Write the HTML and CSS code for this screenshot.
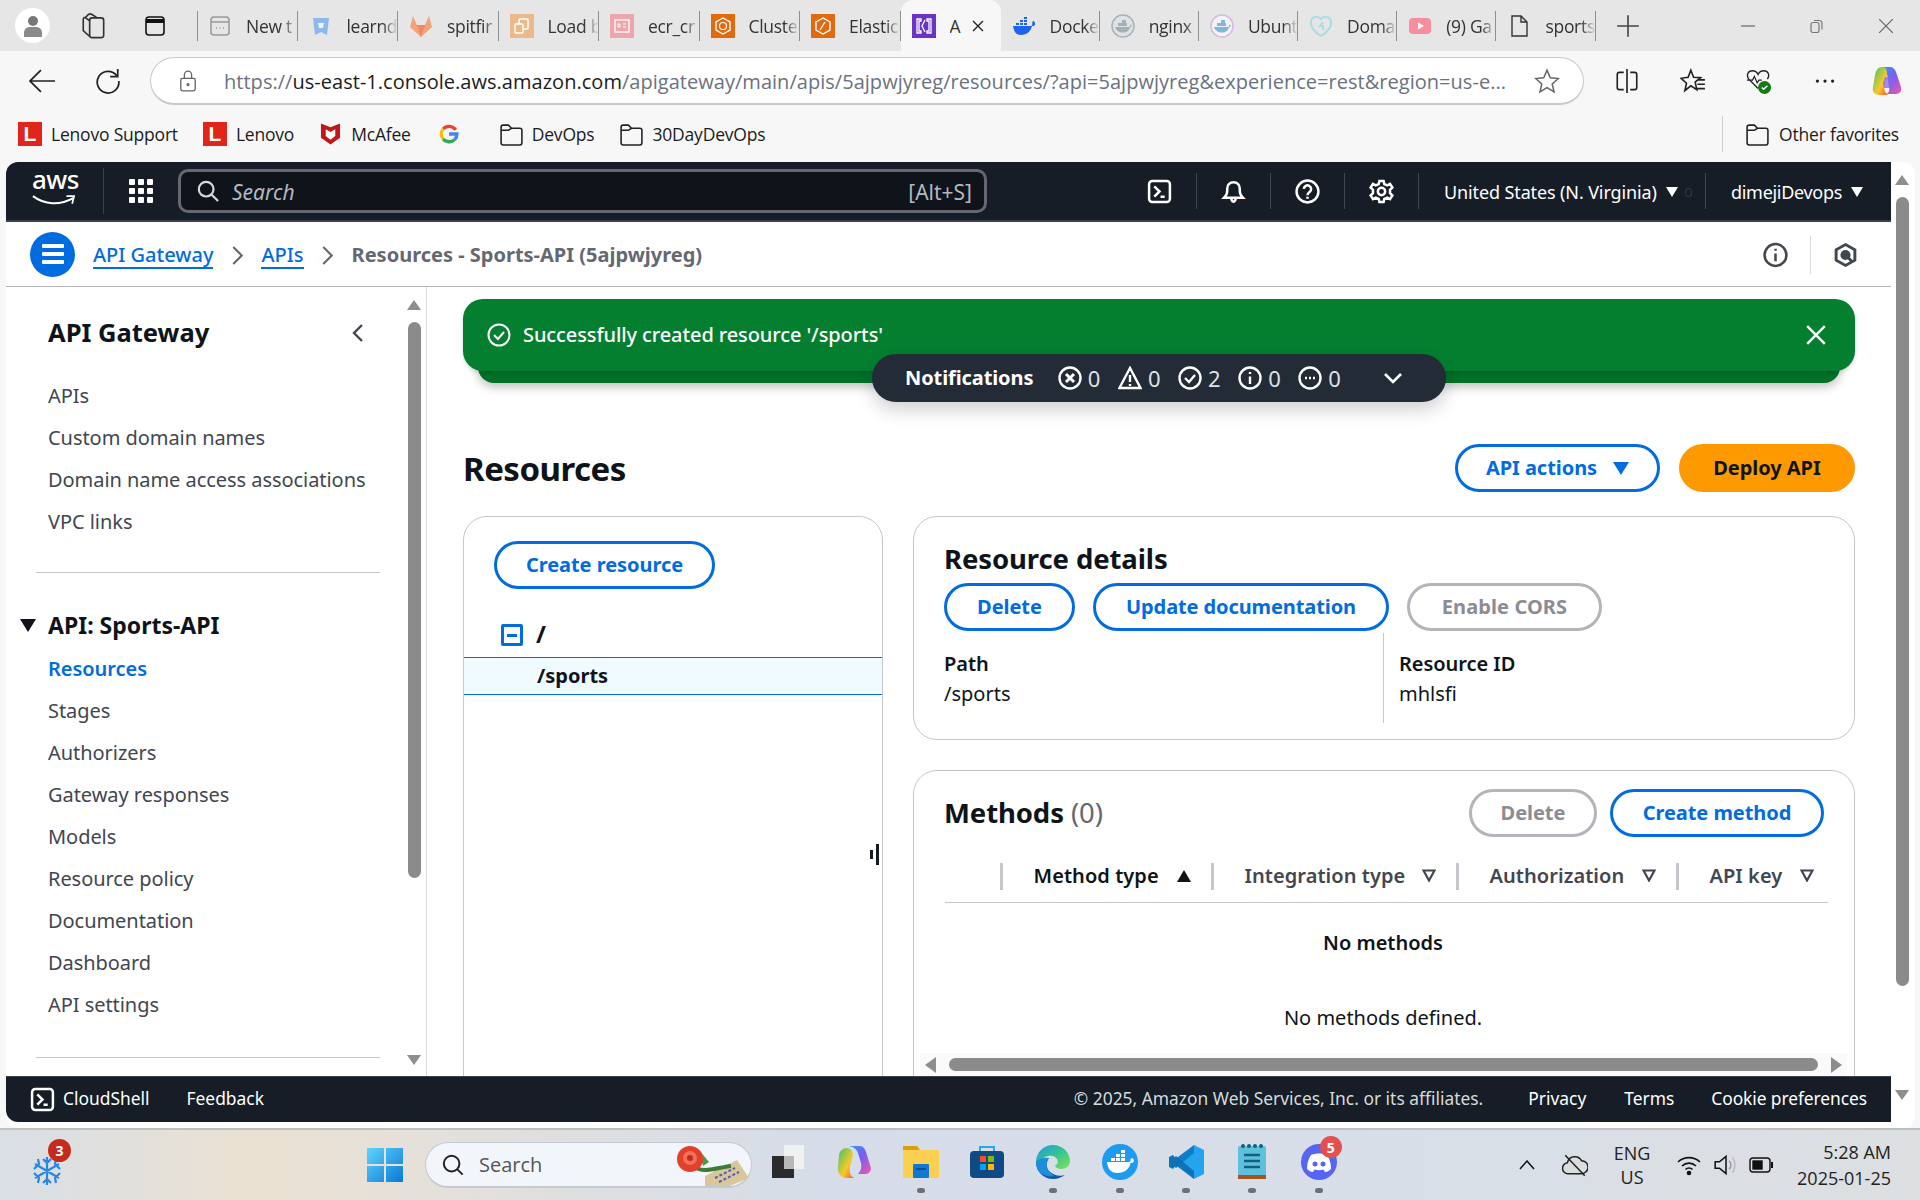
FILE: index.html
```html
<!DOCTYPE html>
<html lang="en">
<head>
<meta charset="utf-8">
<title>API Gateway - Resources</title>
<link rel="stylesheet" href="styles.css">
</head>
<body>
<div class="tabstrip">
  <div class="profile"><svg viewBox="0 0 24 24" width="24" height="24"><circle cx="12" cy="7" r="5" fill="#777"/><path d="M3 23v-4c0-4 3-6 6-6h6c3 0 6 2 6 6v4z" fill="#8a8a8a"/></svg></div>
  <svg class="chrome-ic ws" viewBox="0 0 24 24" fill="none" stroke="#333" stroke-width="1.400"><rect x="10" y="5" width="12" height="17" rx="2"/><path d="M10 7.500 6.500 5C5.500 4.400 4.500 5 4.500 6.200V16l5.500 5"/><path d="M6 5l3-3c1-.6 2-.4 3 .2l4.500 2.800"/></svg>
  <svg class="chrome-ic vt" viewBox="0 0 24 24" fill="none" stroke="#111" stroke-width="1.600"><rect x="3" y="3" width="18" height="18" rx="3"/><path d="M3 7h18" stroke-width="4"/></svg>
  <div class="tabs">
    <div class="tab tab-first"><svg class="tab-ic" viewBox="0 0 24 24" fill="none" stroke="#999" stroke-width="1.500"><rect x="3" y="3" width="18" height="18" rx="3"/><path d="M3 8h18M8 14h1M11.500 14h1M15 14h1"/></svg><span class="tab-label">New t</span></div>
    <div class="tab"><svg class="tab-ic" viewBox="0 0 24 24"><path d="M4 4h16l-2 17-6-3-6 3z" fill="#8db8ee"/><path d="M9 9h6l-1 5h-4z" fill="#eef4fc"/></svg><span class="tab-label">learnd</span></div>
    <div class="tab"><svg class="tab-ic" viewBox="0 0 24 24"><path d="M12 23 1 13 4 2l4 9h8l4-9 3 11z" fill="#f3a27b"/><path d="M12 23 8 11h8z" fill="#ee8a63"/></svg><span class="tab-label">spitfir</span></div>
    <div class="tab"><svg class="tab-ic" viewBox="0 0 24 24"><rect width="24" height="24" fill="#ecb98a"/><rect x="9" y="5" width="9" height="10" rx="1" fill="none" stroke="#fff" stroke-width="1.500"/><rect x="5" y="10" width="8" height="9" rx="1" fill="#ecb98a" stroke="#fff" stroke-width="1.500"/></svg><span class="tab-label">Load b</span></div>
    <div class="tab"><svg class="tab-ic" viewBox="0 0 24 24"><rect width="24" height="24" fill="#eda6ab"/><rect x="5" y="6" width="14" height="12" fill="none" stroke="#fff" stroke-width="1.300"/><path d="M8 10h2v3H8zM13 10h3M13 13h3" stroke="#fff" fill="none"/></svg><span class="tab-label">ecr_cr</span></div>
    <div class="tab"><svg class="tab-ic" viewBox="0 0 24 24"><rect width="24" height="24" fill="#e26a0e"/><path d="M12 4 5 8v8l7 4 7-4V8z" fill="none" stroke="#fff" stroke-width="1.400"/><circle cx="12" cy="12" r="3.500" fill="none" stroke="#fff" stroke-width="1.200"/></svg><span class="tab-label">Cluste</span></div>
    <div class="tab"><svg class="tab-ic" viewBox="0 0 24 24"><rect width="24" height="24" fill="#e26a0e"/><path d="M12 4 5 8v8l7 4 7-4V8z" fill="none" stroke="#fff" stroke-width="1.400"/><path d="M14 8 9 16" stroke="#fff" stroke-width="1.400"/></svg><span class="tab-label">Elastic</span></div>
    <div class="tab tab-active"><svg class="tab-ic" viewBox="0 0 24 24"><rect width="24" height="24" fill="#6a35c4"/><path d="M5 5h4v2H7v10h2v2H5zM19 5h-4v2h2v10h-2v2h4zM13 6l-3 6 3 6" fill="none" stroke="#fff" stroke-width="1.300"/></svg><span class="tab-label tab-label-active">A</span><svg class="tab-close" viewBox="0 0 14 14" stroke="#222" stroke-width="1.400"><path d="M2 2l10 10M12 2 2 12"/></svg></div>
    <div class="tab tab-right"><svg class="tab-ic" viewBox="0 0 24 24"><path d="M1 12h18c1 0 2-2 1-4l1.500-1c1 1 2 2 1.500 4-1 1-2 1-3 1-1 5-5 9-11 9-5 0-7-3-8-9z" fill="#1d63ed"/><path d="M4 9h3v2H4zM8 9h3v2H8zM12 9h3v2h-3zM8 6h3v2H8zM12 6h3v2h-3zM12 3h3v2h-3z" fill="#1d63ed"/></svg><span class="tab-label">Docke</span></div>
    <div class="tab tab-right"><svg class="tab-ic" viewBox="0 0 24 24"><circle cx="12" cy="12" r="11" fill="#dfe3e6" stroke="#a8b2b8" stroke-width="1.500"/><path d="M4 13h14c1 0 1.500-1 1-2l1.500-.5c.5 1 0 2.500-1.500 3-1 3-3 5-7 5s-7-2-8-5.500zM7 9h9v3H7zM11 6h4v3h-4z" fill="#a4b0b6"/></svg><span class="tab-label">nginx</span></div>
    <div class="tab tab-right"><svg class="tab-ic" viewBox="0 0 24 24"><circle cx="12" cy="12" r="11" fill="#f7f2f5" stroke="#d9b7e2" stroke-width="1.500"/><path d="M4 13h14c1 0 1.500-1 1-2l1.500-.5c.5 1 0 2.500-1.500 3-1 3-3 5-7 5s-7-2-8-5.500zM7 9h9v3H7zM11 6h4v3h-4z" fill="#7fb8df"/></svg><span class="tab-label">Ubunt</span></div>
    <div class="tab tab-right"><svg class="tab-ic" viewBox="0 0 24 24" fill="none" stroke="#a9dde3" stroke-width="2"><path d="M12 22C5 18 1 12 2 7c1-4 6-6 10-2 4-4 9-2 10 2 1 5-3 11-10 15z"/><path d="M14 8l-3 4h3v4"/></svg><span class="tab-label">Doma</span></div>
    <div class="tab tab-right"><svg class="tab-ic" viewBox="0 0 24 24"><rect x="1" y="4" width="22" height="16" rx="4" fill="#f68ea0"/><path d="M10 8.500 16 12l-6 3.500z" fill="#fff"/></svg><span class="tab-label">(9) Ga</span></div>
    <div class="tab tab-right"><svg class="tab-ic" viewBox="0 0 24 24" fill="none" stroke="#333" stroke-width="1.400"><path d="M5 2h9l6 6v14H5z M14 2v6h6"/></svg><span class="tab-label">sports</span></div>
  </div>
  <svg class="chrome-ic plus" viewBox="0 0 24 24" stroke="#444" stroke-width="1.500"><path d="M12 2v20M2 12h20"/></svg>
  <div class="win-ctrl">
    <svg viewBox="0 0 14 14" stroke="#666" stroke-width="1.200"><path d="M0 7h14"/></svg>
    <svg viewBox="0 0 14 14" fill="none" stroke="#777" stroke-width="1.200"><rect x="1" y="3.500" width="8" height="10" rx="2"/><path d="M4 1.500h5c2 0 3 1 3 3v6"/></svg>
    <svg viewBox="0 0 14 14" stroke="#666" stroke-width="1.200"><path d="M0 0l14 14M14 0 0 14"/></svg>
  </div>
</div>

<div class="toolbar">
  <svg class="tb-back" viewBox="0 0 24 24" fill="none" stroke="#222" stroke-width="1.600"><path d="M24 12H1M11 2 1 12l10 10"/></svg>
  <svg class="tb-reload" viewBox="0 0 24 24" fill="none" stroke="#222" stroke-width="1.600"><path d="M20 7A10 10 0 1 0 22 12M21 1v7h-7"/></svg>
  <div class="addr">
    <svg class="addr-lock" viewBox="0 0 20 24" fill="none" stroke="#666" stroke-width="1.500"><rect x="2" y="9" width="16" height="14" rx="2"/><path d="M6 9V5a4 4 0 0 1 8 0v4"/><circle cx="10" cy="16" r="1" fill="#666"/></svg>
    <div class="addr-url"><span class="u-dim">https://</span><span class="u-host">us-east-1.console.aws.amazon.com</span><span class="u-dim">/apigateway/main/apis/5ajpwjyreg/resources/?api=5ajpwjyreg&amp;experience=rest&amp;region=us-e...</span></div>
    <svg class="addr-star" viewBox="0 0 24 24" fill="none" stroke="#666" stroke-width="1.400"><path d="M12 2l3 7 7.500.7-5.700 5 1.700 7.300-6.500-3.900L5.500 22l1.700-7.300-5.700-5L9 9z"/></svg>
  </div>
  <div class="tb-right">
    <svg viewBox="0 0 24 24" fill="none" stroke="#222" stroke-width="1.500"><path d="M12 1v22M9 4H5a2 2 0 0 0-2 2v12a2 2 0 0 0 2 2h4M15 4h4a2 2 0 0 1 2 2v12a2 2 0 0 1-2 2h-4"/></svg>
    <svg viewBox="0 0 24 24" fill="none" stroke="#222" stroke-width="1.500"><path d="M10 2l2.500 6.500L19 9l-5 4 1.500 7-5.500-3.500L4.500 21 6 14 1 9.500l6.500-1zM17 11h6M16 15h7M15 19h8"/></svg>
    <svg viewBox="0 0 28 28"><path d="M13 22 3 12C0 8 2 3 7 3c3 0 5 2 6 4 1-2 3-4 6-4 5 0 7 5 4 9" fill="none" stroke="#222" stroke-width="1.500"/><path d="M1 13h6l2-4 3 7 2-3h3" fill="none" stroke="#222" stroke-width="1.300"/><circle cx="20" cy="21" r="7" fill="#107c10"/><path d="m17 21 2 2 4-4" fill="none" stroke="#fff" stroke-width="1.500"/></svg>
    <svg viewBox="0 0 24 24" fill="#222"><circle cx="5" cy="12" r="1.500"/><circle cx="12" cy="12" r="1.500"/><circle cx="19" cy="12" r="1.500"/></svg>
    <svg viewBox="0 0 32 32"><defs><linearGradient id="cpA" x1="0" y1="0" x2="1" y2="1"><stop offset="0" stop-color="#2f9bff"/><stop offset=".5" stop-color="#7b5cf0"/><stop offset="1" stop-color="#f25aa8"/></linearGradient><linearGradient id="cpB" x1="0" y1="0" x2="1" y2="1"><stop offset="0" stop-color="#35c46b"/><stop offset=".6" stop-color="#f7c92c"/><stop offset="1" stop-color="#f25a3a"/></linearGradient></defs><path d="M10 2h9c3 0 5 2 6 5l5 15c1 4-1 7-5 7H15c3-1 4-4 3-7L16 9c-1-4-3-7-6-7z" fill="url(#cpA)"/><path d="M4 10C5 5 7 2 11 2c3 0 5 2 5 6v2l-2 8c-1 5-1 9 3 12H8c-5 0-7-4-6-8z" fill="url(#cpB)"/><path d="M14 12h8l1 6-3 5h-7l-1-5z" fill="#8a64e8" opacity=".75"/></svg>
  </div>
</div>

<div class="bookmarks">
  <div class="bm"><span class="bm-lenovo">L</span>Lenovo Support</div>
  <div class="bm bm-l2"><span class="bm-lenovo">L</span>Lenovo</div>
  <div class="bm bm-mc"><svg class="bm-ic" viewBox="0 0 22 24"><path d="M1 1l10 4 10-4v15l-10 7-10-7z" fill="#c01818"/><path d="M6 7l5 3 5-3v7l-5 4-5-4z" fill="#fff"/></svg>McAfee</div>
  <div class="bm bm-google"><svg class="bm-ic" viewBox="0 0 24 24" fill="none" stroke-width="4"><path d="M20 7A9.500 9.500 0 0 0 5 6" stroke="#ea4335"/><path d="M5 6a9.500 9.500 0 0 0 0 12" stroke="#fbbc05"/><path d="M5 18a9.500 9.500 0 0 0 14 .5" stroke="#34a853"/><path d="M19 18.500c2-2 2.500-4 2.500-6.500H12" stroke="#4285f4"/></svg></div>
  <div class="bm"><svg class="bm-folder" viewBox="0 0 24 24" fill="none" stroke="#222" stroke-width="1.500"><path d="M2 20V5a2 2 0 0 1 2-2h5l3 3h8a2 2 0 0 1 2 2v12a2 2 0 0 1-2 2H4a2 2 0 0 1-2-2zM2 8h7l3-2"/></svg>DevOps</div>
  <div class="bm"><svg class="bm-folder" viewBox="0 0 24 24" fill="none" stroke="#222" stroke-width="1.500"><path d="M2 20V5a2 2 0 0 1 2-2h5l3 3h8a2 2 0 0 1 2 2v12a2 2 0 0 1-2 2H4a2 2 0 0 1-2-2zM2 8h7l3-2"/></svg>30DayDevOps</div>
  <div class="bm bm-other"><svg class="bm-folder" viewBox="0 0 24 24" fill="none" stroke="#222" stroke-width="1.500"><path d="M2 20V5a2 2 0 0 1 2-2h5l3 3h8a2 2 0 0 1 2 2v12a2 2 0 0 1-2 2H4a2 2 0 0 1-2-2zM2 8h7l3-2"/></svg>Other favorites</div>
</div>

<div class="webview">
  <div class="page">
    <header class="topnav">
      <div class="aws-logo"><span class="aws-word">aws</span><svg class="aws-smile" viewBox="0 0 46 12" fill="none" stroke="#fff" stroke-width="2.200"><path d="M1 2c12 9 28 10 42 2"/><path d="M36 2h8l-2 8" stroke-width="1.800"/></svg></div>
      <div class="waffle"><i></i><i></i><i></i><i></i><i></i><i></i><i></i><i></i><i></i></div>
      <div class="searchbox">
        <svg class="search-ic" viewBox="0 0 24 24" fill="none" stroke="#d5dbdb" stroke-width="2.400"><circle cx="10" cy="10" r="8"/><path d="m16 16 7 7"/></svg>
        <span class="search-ph">Search</span>
        <span class="search-kbd">[Alt+S]</span>
      </div>
      <div class="nav-icons">
        <div class="nav-ic"><svg viewBox="0 0 24 24" fill="none" stroke="#fff" stroke-width="2.400"><rect x="2" y="2" width="20" height="20" rx="3"/><path d="m7 7 5 5-5 5M13 17h4"/></svg></div>
        <div class="nav-ic"><svg viewBox="0 0 24 24" fill="none" stroke="#fff" stroke-width="2.400"><path d="M3 18c3-3 3-5 3-9a6 6 0 0 1 12 0c0 4 0 6 3 9zM10 18c0 5 4 5 4 0"/></svg></div>
        <div class="nav-ic"><svg viewBox="0 0 24 24" fill="none" stroke="#fff" stroke-width="2.400"><circle cx="12" cy="12" r="10.500"/><path d="M8.500 9.500a3.500 3.500 0 1 1 5.500 3c-1.500 1-2 1.500-2 3M12 17v2"/></svg></div>
        <div class="nav-ic"><svg viewBox="0 0 24 24" fill="none" stroke="#fff" stroke-width="2.400"><circle cx="12" cy="12" r="3.500"/><path d="M10 2h4l.7 3 2.800 1.200 2.700-1.500 2.300 3.500-2.300 2.100v3.400l2.300 2.100-2.300 3.500-2.700-1.500-2.800 1.200-.7 3h-4l-.7-3-2.800-1.200-2.700 1.500-2.300-3.500 2.300-2.100v-3.400L1.500 8.200 3.800 4.700l2.700 1.500L9.300 5z"/></svg></div>
      </div>
      <div class="nav-region">United States (N. Virginia)<span class="tri-down"></span><span class="tiny-o"></span></div>
      <div class="nav-user">dimejiDevops<span class="tri-down"></span></div>
    </header>

    <div class="crumbbar">
      <div class="burger"><i></i><i></i><i></i></div>
      <a class="crumb-link">API Gateway</a>
      <svg class="crumb-sep" viewBox="0 0 10 18" fill="none" stroke="#656871" stroke-width="2"><path d="m1 1 8 8-8 8"/></svg>
      <a class="crumb-link">APIs</a>
      <svg class="crumb-sep" viewBox="0 0 10 18" fill="none" stroke="#656871" stroke-width="2"><path d="m1 1 8 8-8 8"/></svg>
      <span class="crumb-cur">Resources - Sports-API (5ajpwjyreg)</span>
      <div class="crumb-tools">
        <svg class="crumb-tool" viewBox="0 0 24 24" fill="none" stroke="#424650" stroke-width="2.400"><circle cx="12" cy="12" r="10.500"/><path d="M12 10.500V18M12 6v2"/></svg>
        <span class="crumb-div"></span>
        <svg class="crumb-tool" viewBox="0 0 24 24" fill="none" stroke="#424650" stroke-width="2.800"><path d="M12 2l9 5v10l-9 5-9-5V7z"/><circle cx="12" cy="12" r="3.500" fill="#424650"/><path d="m12 12 6 6"/></svg>
      </div>
    </div>

    <div class="workspace">
      <aside class="side">
        <nav class="side-nav">
          <div class="side-head"><h2 class="side-title">API Gateway</h2><svg class="side-back" viewBox="0 0 12 20" fill="none" stroke="#424650" stroke-width="2.400"><path d="M10 2 2 10l8 8"/></svg></div>
          <a class="side-link">APIs</a>
          <a class="side-link">Custom domain names</a>
          <a class="side-link">Domain name access associations</a>
          <a class="side-link">VPC links</a>
          <hr class="side-hr">
          <div class="side-section"><span class="tri-section"></span>API: Sports-API</div>
          <a class="side-link side-active">Resources</a>
          <a class="side-link">Stages</a>
          <a class="side-link">Authorizers</a>
          <a class="side-link">Gateway responses</a>
          <a class="side-link">Models</a>
          <a class="side-link">Resource policy</a>
          <a class="side-link">Documentation</a>
          <a class="side-link">Dashboard</a>
          <a class="side-link">API settings</a>
          <hr class="side-hr side-hr-end">
        </nav>
        <div class="side-scroll">
          <span class="arrow-up"></span>
          <span class="side-thumb"></span>
          <span class="arrow-down"></span>
        </div>
      </aside>

      <main class="main">
        <div class="flash-stack">
          <div class="flash">
            <svg class="flash-ic" viewBox="0 0 24 24" fill="none" stroke="#fff" stroke-width="2"><circle cx="12" cy="12" r="10.500"/><path d="m7 12 4 4 6-7"/></svg>
            <span class="flash-text">Successfully created resource '/sports'</span>
            <svg class="flash-x" viewBox="0 0 20 20" stroke="#fff" stroke-width="2.200"><path d="m2 2 16 16M18 2 2 18"/></svg>
          </div>
          <div class="flash-under"></div>
          <div class="notif">
            <strong class="notif-title">Notifications</strong>
            <span class="notif-item"><svg viewBox="0 0 24 24" fill="none" stroke="#fff" stroke-width="2.400"><circle cx="12" cy="12" r="10.500"/><path d="m8 8 8 8M16 8l-8 8" stroke-width="3"/></svg>0</span>
            <span class="notif-item"><svg viewBox="0 0 24 24" fill="none" stroke="#fff" stroke-width="2.400"><path d="M12 2 1.500 22h21zM12 9v7M12 18v2"/></svg>0</span>
            <span class="notif-item"><svg viewBox="0 0 24 24" fill="none" stroke="#fff" stroke-width="2.400"><circle cx="12" cy="12" r="10.500"/><path d="m7 12 4 4 6-7"/></svg>2</span>
            <span class="notif-item"><svg viewBox="0 0 24 24" fill="none" stroke="#fff" stroke-width="2.400"><circle cx="12" cy="12" r="10.500"/><path d="M12 10.500V18M12 6v2"/></svg>0</span>
            <span class="notif-item"><svg viewBox="0 0 24 24" fill="none" stroke="#fff" stroke-width="2.400"><circle cx="12" cy="12" r="10.500"/><path d="M7 12h2M11 12h2M15 12h2"/></svg>0</span>
            <svg class="notif-chev" viewBox="0 0 20 12" fill="none" stroke="#fff" stroke-width="2.600"><path d="m2 2 8 8 8-8"/></svg>
          </div>
        </div>

        <div class="page-head">
          <h1 class="page-title">Resources</h1>
          <div class="page-actions">
            <button class="btn btn-actions">API actions<span class="tri-blue"></span></button>
            <button class="btn btn-primary">Deploy API</button>
          </div>
        </div>

        <div class="content-grid">
          <section class="card tree-card">
            <button class="btn btn-create">Create resource</button>
            <div class="tree-root"><span class="tree-box"><i></i></span><span class="tree-name tree-slash">/</span></div>
            <div class="tree-selected"><span class="tree-name">/sports</span></div>
            <span class="resize-cursor"><i></i><b></b></span>
          </section>

          <div class="right-col">
            <section class="card details-card">
              <h2 class="card-title">Resource details</h2>
              <div class="details-actions">
                <button class="btn btn-del">Delete</button>
                <button class="btn btn-doc">Update documentation</button>
                <button class="btn btn-off btn-cors">Enable CORS</button>
              </div>
              <div class="details-grid">
                <div class="detail"><div class="detail-k">Path</div><div class="detail-v">/sports</div></div>
                <div class="detail detail-right"><div class="detail-k">Resource ID</div><div class="detail-v">mhlsfi</div></div>
              </div>
            </section>

            <section class="card methods-card">
              <div class="methods-head">
                <h2 class="card-title methods-title">Methods <span class="count">(0)</span></h2>
                <div class="methods-actions">
                  <button class="btn btn-off btn-mdel">Delete</button>
                  <button class="btn btn-cmethod">Create method</button>
                </div>
              </div>
              <div class="table-head">
                <span class="th-blank"></span>
                <span class="th th-sorted">Method type<span class="sort-up"></span></span>
                <span class="th">Integration type<svg class="sort-down" viewBox="0 0 14 13" fill="none" stroke="#424650" stroke-width="2.200"><path d="M1.500 1.500h11L7 11.500z"/></svg></span>
                <span class="th">Authorization<svg class="sort-down" viewBox="0 0 14 13" fill="none" stroke="#424650" stroke-width="2.200"><path d="M1.500 1.500h11L7 11.500z"/></svg></span>
                <span class="th th-last">API key<svg class="sort-down" viewBox="0 0 14 13" fill="none" stroke="#424650" stroke-width="2.200"><path d="M1.500 1.500h11L7 11.500z"/></svg></span>
              </div>
              <div class="empty">
                <div class="empty-title">No methods</div>
                <div class="empty-text">No methods defined.</div>
              </div>
              <div class="hscroll"><span class="arrow-left"></span><span class="hthumb"></span><span class="arrow-right"></span></div>
            </section>
          </div>
        </div>
      </main>
    </div>

    <footer class="footer">
      <svg class="foot-ic" viewBox="0 0 24 24" fill="none" stroke="#fff" stroke-width="2.400"><rect x="2" y="2" width="20" height="20" rx="3"/><path d="m7 7 5 5-5 5M13 17h4"/></svg>
      <span class="foot-link">CloudShell</span>
      <span class="foot-link foot-feedback">Feedback</span>
      <span class="foot-copy">© 2025, Amazon Web Services, Inc. or its affiliates.</span>
      <span class="foot-link foot-r1">Privacy</span>
      <span class="foot-link foot-r2">Terms</span>
      <span class="foot-link foot-r3">Cookie preferences</span>
    </footer>
  </div>
  <div class="pagebar">
    <span class="arrow-up"></span>
    <span class="page-thumb"></span>
    <span class="arrow-down"></span>
  </div>
</div>

<div class="taskbar">
  <div class="tk-weather">
    <svg class="tk-snow" viewBox="0 0 32 32" fill="none" stroke="#2a86e0" stroke-width="2.200"><path d="M16 2v28M4 9l24 14M28 9 4 23M12 4l4 4 4-4M12 28l4-4 4 4M3 14l5-5-1-5M29 18l-5 5 1 5M29 14l-5-5 1-5M3 18l5 5-1 5"/></svg>
    <span class="tk-badge tk-badge-red">3</span>
  </div>
  <svg class="tk-win" viewBox="0 0 36 36"><defs><linearGradient id="w1" x1="0" y1="0" x2="1" y2="1"><stop offset="0" stop-color="#5fd4fb"/><stop offset="1" stop-color="#0a78d6"/></linearGradient></defs><path d="M0 1h17v16H0zM19 1h17v16H19zM0 19h17v16H0zM19 19h17v16H19z" fill="url(#w1)"/></svg>
  <div class="tk-search">
    <svg class="tk-search-ic" viewBox="0 0 24 24" fill="none" stroke="#222" stroke-width="2.200"><circle cx="10.500" cy="10.500" r="8.500"/><path d="m16.500 16.500 6 6"/></svg>
    <span class="tk-search-text">Search</span>
    <svg class="tk-rose" viewBox="0 0 74 42"><path d="M30 32 62 16l12 18-24 10H30z" fill="#d8c79a"/><path d="M40 34l20-10M44 38l20-10" stroke="#5a5aa8" stroke-width="2" stroke-dasharray="3 2"/><path d="M18 22c10 8 22 2 38 0" stroke="#3f7a3a" stroke-width="4" fill="none"/><path d="M24 6l10 12-6 4z" fill="#4d9a45"/><circle cx="15" cy="15" r="13" fill="#e2402c"/><circle cx="15" cy="14" r="7" fill="#f0705c"/><circle cx="15" cy="14" r="3" fill="#c22a1c"/></svg>
  </div>
  <div class="tk-apps">
    <div class="tk-app"><svg viewBox="0 0 36 36"><rect x="14" y="1" width="20" height="24" fill="#f1f1f1"/><rect x="2" y="12" width="22" height="22" fill="#2b2b2b"/><rect x="14" y="12" width="10" height="13" fill="#b8b8b8"/></svg></div>
    <div class="tk-app"><svg viewBox="0 0 36 36"><path d="M12 2h12c3 0 5 3 6 6l5 16c0 4-3 6-6 6h-7c3-3 4-7 3-11l-3-10c-1-3-4-7-10-7z" fill="url(#cpA)"/><path d="M3 12c0-5 4-8 8-8 3 0 6 3 6 7l-3 11c-1 5 0 10 4 12h-7c-6 0-10-5-9-11z" fill="url(#cpB)"/></svg></div>
    <div class="tk-app tk-run"><svg viewBox="0 0 36 36"><path d="M0 2h14l3 4H0z" fill="#d99e0b"/><rect y="6" width="36" height="28" fill="#fbcf4f"/><rect x="10" y="20" width="16" height="14" rx="1" fill="#0f78d4"/><path d="M13 25h10" stroke="#0a4e8c" stroke-width="2"/></svg></div>
    <div class="tk-app"><svg viewBox="0 0 36 36"><path d="M11 8V3h14v5" fill="none" stroke="#28a8ea" stroke-width="2"/><rect x="1" y="7" width="34" height="27" rx="4" fill="#0f4a85"/><path d="M11 12h6v6h-6z" fill="#f25022"/><path d="M19 12h6v6h-6z" fill="#7fba00"/><path d="M11 20h6v6h-6z" fill="#00a4ef"/><path d="M19 20h6v6h-6z" fill="#ffb900"/></svg></div>
    <div class="tk-app tk-run"><svg viewBox="0 0 36 36"><defs><linearGradient id="ed" x1="0" y1="0" x2="1" y2="1"><stop offset="0" stop-color="#1f9be0"/><stop offset=".5" stop-color="#36c38f"/><stop offset="1" stop-color="#7fe35a"/></linearGradient></defs><path d="M1 18C1 8 9 1 18 1c10 0 17 8 17 16 0 6-5 8-9 8-3 0-5-1-6-3 4-2 4-8-2-10-6-1-11 2-13 6z" fill="url(#ed)"/><path d="M1 18c0 10 8 17 17 17 5 0 9-2 12-4-6 2-12 0-16-4-3-3-3-9 0-13C8 14 3 16 1 18z" fill="#0c59a4"/><path d="M1 18c2-3 7-5 13-4-3 4-3 10 0 13 1 2 3 3 5 5C9 34 1 28 1 18z" fill="#1b8fdc"/></svg></div>
    <div class="tk-app tk-run"><svg viewBox="0 0 36 36"><circle cx="18" cy="18" r="18" fill="#1d9bf0"/><path d="M5 18h22c1 0 2-1 1.500-3l2-1c1 1 2 3 1 4-1 1-2 1-3 1-1 6-6 10-13 10S6 25 5 18z" fill="#fff"/><path d="M9 14h4v3H9zM14 14h4v3h-4zM19 14h4v3h-4zM14 10h4v3h-4zM19 10h4v3h-4zM19 6h4v3h-4z" fill="#fff"/></svg></div>
    <div class="tk-app tk-run"><svg viewBox="0 0 36 36"><path d="M26 1 36 6v24l-10 5L10 20l16-13z" fill="#24a4ee"/><path d="M26 1v8L8 24l-6-5z" fill="#0b7fc9"/><path d="M26 35v-8L8 12l-6 5z" fill="#0a6fb3" opacity=".9"/><path d="M1 13 5 11l5 7-5 7-4-2z" fill="#0f72b5"/></svg></div>
    <div class="tk-app tk-run"><svg viewBox="0 0 36 36"><rect x="4" y="2" width="28" height="30" rx="2" fill="#5fc0dc"/><rect x="4" y="31" width="28" height="4" fill="#a8521c"/><path d="M10 11h16M10 17h16M10 23h16" stroke="#155f7e" stroke-width="2.500"/><g fill="#155f7e"><circle cx="9" cy="2" r="2"/><circle cx="15" cy="2" r="2"/><circle cx="21" cy="2" r="2"/><circle cx="27" cy="2" r="2"/></g></svg></div>
    <div class="tk-app tk-run tk-discord"><svg viewBox="0 0 36 36"><circle cx="18" cy="18" r="18" fill="#5865f2"/><path d="M10 11c5-2 11-2 16 0 3 4 4 9 4 14-2 2-4 3-6 3l-1.500-2.500c-3 1-6 1-9 0L12 28c-2 0-4-1-6-3 0-5 1-10 4-14z" fill="#fff"/><circle cx="14" cy="20" r="2.500" fill="#5865f2"/><circle cx="22" cy="20" r="2.500" fill="#5865f2"/></svg><span class="tk-badge tk-badge-rose">5</span></div>
  </div>
  <div class="tray">
    <svg class="tray-chev" viewBox="0 0 16 10" fill="none" stroke="#111" stroke-width="1.500"><path d="m1 9 7-8 7 8"/></svg>
    <svg class="tray-cloud" viewBox="0 0 24 24" fill="none" stroke="#222" stroke-width="1.400"><path d="M6 20a5 5 0 0 1-1-10 7 7 0 0 1 13-2 6 6 0 0 1 0 12z" fill="#ddd"/><path d="M3 3l18 19"/></svg>
    <div class="tray-lang">ENG<br>US</div>
    <svg class="tray-wifi" viewBox="0 0 24 24" fill="none" stroke="#111" stroke-width="1.600"><path d="M1 9a16 16 0 0 1 22 0M5 13a10 10 0 0 1 14 0M8.500 16.500a5 5 0 0 1 7 0"/><circle cx="12" cy="20" r="1.500" fill="#111"/></svg>
    <svg class="tray-vol" viewBox="0 0 24 24" fill="none" stroke="#111" stroke-width="1.400"><path d="M2 9h4l6-5v16l-6-5H2z"/><path d="M15 8c2 2 2 6 0 8" stroke="#999"/><path d="M18 5c3 4 3 10 0 14" stroke="#bbb"/></svg>
    <svg class="tray-bat" viewBox="0 0 26 24" fill="none" stroke="#111" stroke-width="1.400"><rect x="1" y="5" width="20" height="14" rx="3"/><rect x="4" y="8" width="9" height="8" fill="#111"/><path d="M23 9v6" stroke-width="2"/></svg>
    <div class="tray-clock">5:28 AM<br>2025-01-25</div>
  </div>
</div>
</body>
</html>
```

FILE: styles.css
```css
* { box-sizing: border-box; }
html, body { margin: 0; height: 100%; }
body {
  width: 1920px; height: 1200px; overflow: hidden;
  display: flex; flex-direction: column;
  background: #f7f7f7; color: #0f141a;
  font-family: "Noto Sans", "Liberation Sans", sans-serif; font-size: 20px;
}
h1, h2 { margin: 0; }
a { text-decoration: none; }
svg { display: block; flex: none; }
button { font-family: inherit; cursor: pointer; }

/* browser tab strip */
.tabstrip { height: 51px; flex: none; background: #e6e6e6; display: flex; align-items: center; font-family: "Open Sans", sans-serif; padding-left: 15px; }
.profile { width: 35px; height: 35px; border-radius: 50%; background: #fff; display: flex; align-items: center; justify-content: center; }
.chrome-ic { width: 28px; height: 28px; }
.ws { margin-left: 28px; }
.vt { margin-left: 37px; width: 24px; height: 24px; }
.tabs { display: flex; height: 51px; margin-left: 30px; }
.tab { width: 100.5px; height: 51px; display: flex; align-items: center; padding-left: 11px; position: relative; }
.tab-first::before { content: ""; position: absolute; left: 0; top: 11px; height: 30px; width: 1px; background: #8f8f8f; }
.tab::after { content: ""; position: absolute; right: 0; top: 11px; height: 30px; width: 1px; background: #8f8f8f; }
.tab-right { width: 99.2px; }
.tab-active { width: 100px; background: #f7f7f7; border-radius: 12px 12px 0 0; }
.tab-active::after { display: none; }
.tab-ic { width: 24px; height: 24px; }
.tab-label { margin-left: 14px; font-size: 17.5px; letter-spacing: -.3px; color: #333; white-space: nowrap; overflow: hidden; width: 54px; -webkit-mask-image: linear-gradient(90deg, #000 70%, transparent); mask-image: linear-gradient(90deg, #000 70%, transparent); }
.tab-label-active { width: 14px; -webkit-mask-image: none; mask-image: none; }
.tab-close { width: 14px; height: 14px; margin-left: 7.500px; }
.plus { margin-left: 19px; width: 26px; height: 26px; }
.win-ctrl { display: flex; margin-left: 100px; gap: 55px; align-items: center; }
.win-ctrl svg { width: 14px; height: 14px; }

/* address toolbar */
.toolbar { height: 59px; flex: none; display: flex; align-items: flex-start; padding-top: 6px; font-family: "Open Sans", sans-serif; }
.tb-back, .tb-reload { width: 26px; height: 26px; margin-top: 11px; }
.tb-back { margin-left: 29px; }
.tb-reload { margin-left: 40px; }
.addr { margin-left: 29px; width: 1434px; height: 48px; border: 1px solid #c9c9c9; border-bottom-width: 2px; border-radius: 24px; background: #fff; display: flex; align-items: center; padding-left: 28px; position: relative; }
.addr-lock { width: 18px; height: 24px; }
.addr-url { margin-left: 27px; width: 1290px; font-size: 20px; letter-spacing: .03px; white-space: nowrap; overflow: hidden; padding-top: 2px; }
.u-dim { color: #6a7280; }
.u-host { color: #1c1c1c; }
.addr-star { width: 26px; height: 26px; margin-left: 20px; }
.tb-right { display: flex; align-items: center; margin-left: 30px; gap: 40px; height: 48px; }
.tb-right svg { width: 26px; height: 26px; }
.tb-right svg:last-child { width: 32px; height: 36px; margin-left: -7px; }

/* bookmarks */
.bookmarks { height: 50px; flex: none; display: flex; align-items: center; padding: 0 0 2px 18px; font-family: "Open Sans", sans-serif; font-size: 17.5px; letter-spacing: -.2px; color: #1c1c1c; }
.bm { display: flex; align-items: center; margin-right: 25px; white-space: nowrap; }
.bm-lenovo { width: 24px; height: 24px; background: #e1251b; color: #fff; font-family: "Liberation Sans", sans-serif; font-weight: 700; font-size: 21px; line-height: 24px; text-align: center; margin-right: 9px; letter-spacing: 0; }
.bm-l2 { margin-right: 26px; }
.bm-mc { margin-right: 28px; }
.bm-ic { width: 21px; height: 24px; margin-right: 10px; }
.bm-google { margin-right: 40px; }
.bm-google .bm-ic { margin-right: 0; width: 20px; height: 20px; }
.bm-folder { width: 25px; height: 25px; margin-right: 8px; }
.bm-other { margin-left: auto; margin-right: 21px; padding-left: 22px; border-left: 1px solid #d0d0d0; height: 36px; }
.bm-other .bm-folder { margin-right: 9px; }

/* web view */
.webview { flex: none; height: 966px; margin: 2px 5px 0 6px; background: #fff; border-radius: 12px; display: flex; }
.page { width: 1885px; display: flex; flex-direction: column; height: 960px; }
.topnav { height: 60px; flex: none; background: #161d26; border-bottom: 2px solid #3a414c; border-radius: 12px 0 0 0; display: flex; align-items: center; color: #fff; font-size: 18px; position: relative; }
.aws-logo { width: 98px; height: 46px; padding-left: 26px; border-right: 1px solid #3a414c; position: relative; }
.aws-word { display: block; font-size: 26px; line-height: 28px; letter-spacing: -.5px; font-weight: 500; margin-top: -3px; }
.aws-smile { width: 44px; height: 12px; margin-top: 1px; }
.waffle { margin-left: 25px; width: 24px; height: 24px; display: grid; grid-template-columns: repeat(3, 6px); gap: 3px; }
.waffle i { background: #fff; border-radius: 1px; }
.searchbox { margin-left: 25px; width: 809px; height: 44px; flex: none; border: 3px solid #656871; border-radius: 10px; background: #0f141a; display: flex; align-items: center; padding: 0 12px 0 16px; }
.search-ic { width: 22px; height: 22px; }
.search-ph { margin-left: 13px; padding-top: 2px; font-style: italic; font-size: 21px; color: #b4b9c1; }
.search-kbd { margin-left: auto; padding-top: 2px; font-size: 21px; color: #b4b9c1; }
.nav-icons { display: flex; margin-left: 136px; }
.nav-ic { width: 74px; height: 36px; display: flex; align-items: center; justify-content: center; border-right: 1px solid #424650; }
.nav-ic svg { width: 25px; height: 25px; }
.nav-region { margin-left: 25px; width: 262px; height: 36px; padding-top: 2px; display: flex; align-items: center; border-right: 1px solid #424650; white-space: nowrap; letter-spacing: -.12px; }
.tri-down { width: 0; height: 0; border-left: 6px solid transparent; border-right: 6px solid transparent; border-top: 10px solid #fff; margin-left: 9px; }
.tiny-o { width: 7px; height: 9px; border: 1px solid #333a44; border-radius: 50%; margin-left: 7px; }
.nav-user { margin-left: 25px; padding-top: 2px; display: flex; align-items: center; letter-spacing: -.3px; }

.crumbbar { height: 65px; flex: none; border-bottom: 1px solid #b4b4bb; display: flex; align-items: center; padding: 0 33px 0 24px; font-size: 20px; }
.burger { width: 45px; height: 45px; border-radius: 50%; background: #006ce0; display: flex; flex-direction: column; justify-content: center; align-items: center; gap: 4px; margin-right: 18px; }
.burger i { width: 22px; height: 4px; background: #fff; border-radius: 1px; }
.crumb-link { color: #006ce0; font-weight: 500; border-bottom: 2px solid #006ce0; line-height: 24px; margin-top: 4px; }
.crumb-sep { width: 11px; height: 19px; margin: 2px 18.500px 0; }
.crumb-cur { color: #656871; font-weight: 700; padding-top: 1px; }
.crumb-tools { margin-left: auto; display: flex; align-items: center; margin-top: 2px; }
.crumb-tool { width: 25px; height: 26px; }
.crumb-div { width: 1px; height: 38px; background: #d8d8dc; margin: 0 22px; }

.workspace { flex: 1; min-height: 0; display: flex; overflow: hidden; }
.side { width: 421px; flex: none; border-right: 1px solid #dcdcdf; display: flex; overflow: hidden; }
.side-nav { width: 400px; flex: none; padding-top: 28px; }
.side-head { display: flex; align-items: center; justify-content: space-between; padding: 0 42px 0 42px; height: 36px; margin-bottom: 24px; }
.side-title { font-size: 25.500px; line-height: 34px; padding-bottom: 2px; font-weight: 700; color: #0f141a; }
.side-back { width: 12px; height: 20px; }
.side-link { display: block; height: 42px; line-height: 42px; padding-left: 42px; color: #424650; white-space: nowrap; font-size: 20px; letter-spacing: -.05px; }
.side-hr { border: 0; border-top: 1px solid #c6c6cd; margin: 29px 0 35px 30px; width: 344px; }
.side-hr-end { margin-top: 31px; }
.side-section { height: 34px; display: flex; align-items: center; font-weight: 700; font-size: 23px; margin-bottom: 6px; padding-left: 14px; }
.tri-section { width: 0; height: 0; border-left: 8px solid transparent; border-right: 8px solid transparent; border-top: 13px solid #0f141a; margin-right: 12px; }
.side-active { color: #006ce0; font-weight: 600; }
.side-scroll { width: 16px; flex: none; display: flex; flex-direction: column; align-items: center; padding-top: 13px; }
.arrow-up { width: 0; height: 0; border-left: 7px solid transparent; border-right: 7px solid transparent; border-bottom: 10px solid #8e8e8e; flex: none; }
.arrow-down { width: 0; height: 0; border-left: 7px solid transparent; border-right: 7px solid transparent; border-top: 10px solid #8e8e8e; flex: none; }
.side-thumb { width: 13px; height: 556px; border-radius: 7px; background: #8b8b8b; margin-top: 12px; flex: none; }
.side-scroll .arrow-down { margin-top: 177px; }

.main { flex: 1; min-width: 0; padding: 12px 36px 0; overflow: hidden; }
.flash-stack { position: relative; }
.flash { position: relative; z-index: 1; height: 72px; background: #037f2f; border-radius: 20px; display: flex; align-items: center; padding: 0 28px 0 24px; color: #fff; box-shadow: 0 2px 4px rgba(0,7,22,.15); }
.flash-ic { width: 24px; height: 24px; }
.flash-text { margin-left: 12px; font-size: 20px; font-weight: 500; position: relative; top: -1px; letter-spacing: -.1px; }
.flash-x { width: 22px; height: 22px; margin-left: auto; }
.flash-under { height: 32px; margin: -20px 15px 0; background: #037028; border-radius: 0 0 16px 16px; box-shadow: 0 4px 10px rgba(0,7,22,.25); }
.notif { position: absolute; z-index: 2; left: 409px; top: 55px; width: 574px; height: 48px; border-radius: 24px; background: #232b37; display: flex; align-items: center; padding: 0 0 1px 33px; color: #fff; box-shadow: 0 8px 18px rgba(0,7,22,.18); }
.notif-title { font-size: 20px; font-weight: 700; margin-right: 7px; letter-spacing: -.1px; }
.notif-item { display: flex; align-items: center; gap: 6px; margin-left: 17.500px; font-size: 22px; color: #dfe2e6; }
.notif-item svg { width: 24px; height: 24px; }
.notif-chev { width: 20px; height: 12px; margin-left: 42px; }

.page-head { display: flex; align-items: center; justify-content: space-between; margin-top: 61px; height: 48px; }
.page-title { font-size: 33px; font-weight: 700; letter-spacing: -.5px; }
.page-actions { display: flex; gap: 19px; }
.btn { height: 48px; border-radius: 24px; font-size: 20px; font-weight: 700; letter-spacing: -.05px; border: 3px solid #006ce0; background: #fff; color: #006ce0; padding: 0 0 2px; display: flex; align-items: center; justify-content: center; white-space: nowrap; }
.btn-actions { width: 205px; }
.tri-blue { width: 0; height: 0; border-left: 8px solid transparent; border-right: 8px solid transparent; border-top: 13px solid #006ce0; margin: 2px 0 0 16px; }
.btn-primary { width: 176px; background: #ff9900; border-color: #ff9900; color: #0f141a; }

.content-grid { display: grid; grid-template-columns: 420px 1fr; gap: 30px; margin-top: 24px; }
.card { border: 1px solid #c6c6cd; border-radius: 24px; background: #fff; }
.tree-card { padding-top: 24px; height: 640px; position: relative; }
.btn-create { width: 221px; margin-left: 30px; }
.tree-root { display: flex; align-items: center; height: 40px; margin-top: 26px; padding-left: 37px; }
.tree-box { width: 22px; height: 22px; border: 3px solid #006ce0; border-radius: 2px; display: flex; align-items: center; justify-content: center; margin-right: 13px; }
.tree-box i { width: 10px; height: 3px; background: #006ce0; }
.tree-name { font-weight: 700; font-size: 20px; position: relative; top: -1px; }
.tree-slash { font-size: 24px; top: -2px; }
.tree-selected { margin-top: 2px; height: 38px; border-top: 1px solid #006ce0; border-bottom: 1px solid #006ce0; background: #f0fbff; display: flex; align-items: center; padding-left: 73px; }
.resize-cursor { position: absolute; right: 3px; top: 327px; display: flex; align-items: center; gap: 3px; }
.resize-cursor i { width: 3px; height: 9px; background: #16191f; }
.resize-cursor b { width: 3px; height: 21px; background: #16191f; }

.right-col { display: flex; flex-direction: column; gap: 30px; }
.card-title { font-size: 27.500px; font-weight: 700; line-height: 38px; letter-spacing: -.1px; }
.methods-title { margin-left: -1px; }
.details-card { height: 224px; padding: 23px 30px 0; }
.details-actions { display: flex; gap: 18px; margin-top: 5px; }
.btn-del { width: 131px; }
.btn-doc { width: 296px; letter-spacing: -.1px; }
.btn-cors { width: 195px; letter-spacing: .1px; }
.btn-off { border-color: #b4b4bb; color: #8c8c94; cursor: default; }
.details-grid { display: grid; grid-template-columns: 439px 1fr; margin-top: 2px; height: 90px; }
.detail { padding-top: 16px; }
.detail-right { border-left: 1px solid #c6c6cd; padding-left: 15px; }
.detail-k { font-weight: 600; font-size: 20px; line-height: 30px; letter-spacing: -.05px; }
.detail-v { font-size: 20px; line-height: 30px; color: #0f141a; }

.methods-card { padding: 18px 26px 0 31px; height: 400px; }
.methods-head { display: flex; align-items: center; justify-content: space-between; height: 48px; padding-right: 4px; }
.count { font-weight: 400; color: #656871; }
.methods-actions { display: flex; gap: 13px; }
.btn-mdel { width: 128px; }
.btn-cmethod { width: 214px; }
.table-head { margin-top: 16px; height: 50px; border-bottom: 1px solid #c6c6cd; display: grid; grid-template-columns: 54.500px 211px 245px 220px 150px; align-items: start; font-size: 20px; }
.th-blank { height: 27px; }
.th { height: 27px; margin-top: 10px; border-left: 3px solid #c6c6cd; padding: 0 20px 2px 31px; display: flex; align-items: center; justify-content: space-between; font-weight: 600; letter-spacing: .06px; color: #424650; white-space: nowrap; line-height: 25px; }
.th-sorted { color: #0f141a; }
.th-last { padding-right: 12px; }
.sort-up { width: 0; height: 0; border-left: 7px solid transparent; border-right: 7px solid transparent; border-bottom: 12px solid #0f141a; }
.sort-down { width: 14px; height: 13px; }
.empty { text-align: center; padding-right: 7px; }
.empty-title { font-weight: 600; font-size: 20px; line-height: 30px; margin-top: 25px; }
.empty-text { font-size: 20px; line-height: 30px; margin-top: 45px; }
.hscroll { margin: 20px -19px 0 -25px; height: 23px; background: #fafafa; display: flex; align-items: center; padding: 0 5px; }
.arrow-left { width: 0; height: 0; border-top: 8px solid transparent; border-bottom: 8px solid transparent; border-right: 11px solid #8e8e8e; }
.arrow-right { width: 0; height: 0; border-top: 8px solid transparent; border-bottom: 8px solid transparent; border-left: 11px solid #8e8e8e; }
.hthumb { height: 13px; flex: 1; margin: 0 13px; border-radius: 7px; background: #8b8b8b; }

.footer { height: 46px; flex: none; background: #161d26; border-top: 1px solid #3a414c; border-radius: 0 0 0 12px; display: flex; align-items: center; color: #fff; font-size: 17.400px; padding: 0 24px 4px 24px; }
.foot-ic { width: 25px; height: 25px; margin: 3px 8px 0 0; }
.foot-feedback { margin-left: 37px; }
.foot-copy { margin-left: auto; color: #d5dbdb; }
.foot-r1 { margin-left: 45px; }
.foot-r2 { margin-left: 38px; }
.foot-r3 { margin-left: 37px; letter-spacing: -.08px; }

.pagebar { width: 24px; flex: none; display: flex; flex-direction: column; align-items: center; padding-top: 13px; padding-right: 2px; }
.page-thumb { width: 13px; height: 789px; border-radius: 7px; background: #8b8b8b; margin-top: 12px; flex: none; }
.pagebar .arrow-down { margin-top: 104px; }

/* taskbar */
.taskbar { flex: none; height: 72px; border-top: 2px solid #bdbfc1; background: linear-gradient(90deg, #d8dfe6 0, #ebe1d2 13%, #e5e0da 22%, #d6dde8 42%, #d8dfe8 75%, #dddfe1 100%); display: flex; align-items: center; position: relative; font-family: "Open Sans", sans-serif; }
.tk-weather { position: relative; margin-left: 31px; width: 32px; height: 32px; margin-top: 12px; }
.tk-snow { width: 32px; height: 32px; }
.tk-badge { position: absolute; display: flex; align-items: center; justify-content: center; border-radius: 50%; color: #fff; font-size: 14px; font-weight: 700; }
.tk-badge-red { width: 23px; height: 23px; background: #c42b1c; right: -8px; top: -16px; }
.tk-badge-rose { width: 22px; height: 22px; background: #e25050; right: -6px; top: -6px; }
.tk-win { width: 36px; height: 36px; margin-left: 304px; }
.tk-search { margin-left: 22px; width: 327px; height: 46px; border-radius: 23px; background: #f2f5f9; border: 1px solid #c4cad3; border-bottom-width: 2px; display: flex; align-items: center; padding-left: 16px; position: relative; }
.tk-search-ic { width: 22px; height: 22px; }
.tk-search-text { margin-left: 15px; font-size: 20px; color: #555; }
.tk-rose { width: 74px; height: 42px; margin-left: auto; margin-right: 2px; }
.tk-apps { display: flex; margin-left: 3px; }
.tk-app { width: 66.300px; height: 58px; display: flex; align-items: flex-start; justify-content: center; padding-top: 8px; position: relative; }
.tk-app svg { width: 36px; height: 36px; }
.tk-run::after { content: ""; position: absolute; left: 50%; margin-left: -4px; bottom: 1px; width: 8px; height: 5px; border-radius: 3px; background: #6d7177; }
.tk-discord .tk-badge { right: 10px; top: 0; }
.tray { margin-left: auto; display: flex; align-items: center; padding-right: 29px; font-size: 18px; color: #222; }
.tray-chev { width: 16px; height: 10px; }
.tray-cloud { width: 26px; height: 26px; margin-left: 27px; }
.tray-lang { margin-left: 16px; width: 56px; text-align: center; line-height: 24px; }
.tray-wifi { width: 24px; height: 24px; margin-left: 17px; }
.tray-vol { width: 26px; height: 26px; margin-left: 12px; }
.tray-bat { width: 26px; height: 24px; margin-left: 10px; }
.tray-clock { margin-left: 22px; text-align: right; line-height: 26px; white-space: nowrap; }
```
